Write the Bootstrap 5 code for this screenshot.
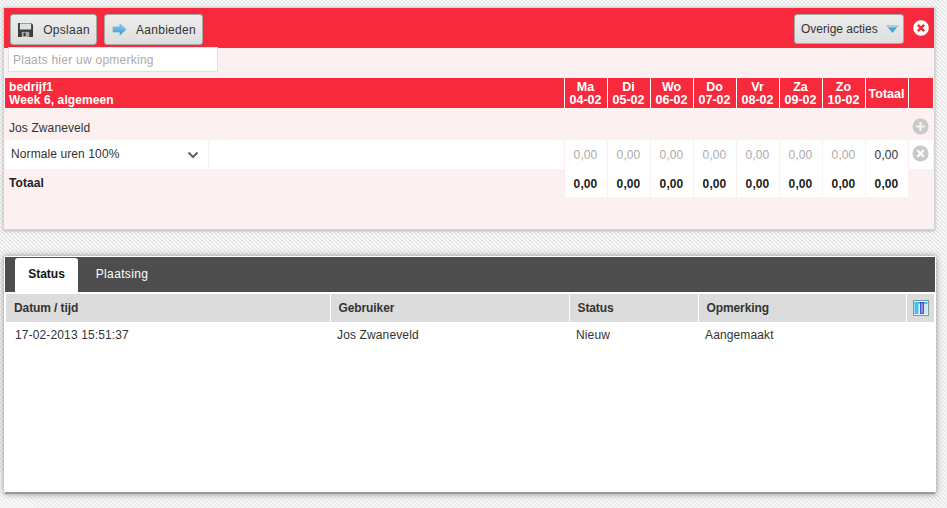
<!DOCTYPE html>
<html lang="nl">
<head>
<meta charset="utf-8">
<title>Week 6</title>
<link rel="stylesheet" href="https://cdn.jsdelivr.net/npm/bootstrap@5.3.0/dist/css/bootstrap.min.css">
<style>
html,body{height:100%}
body{margin:0;padding:7px 0 0 3px;font-family:"Liberation Sans",Arial,sans-serif;font-size:12px;color:#333;letter-spacing:.1px;
background-color:#f3f3f3;background-image:repeating-linear-gradient(45deg,#e8e8e8 0 1.4px,#f8f8f8 1.4px 2.83px);overflow:hidden}
.sheet-top{width:932px;height:223px;background:#fdf0f0;border:1px solid #d4d4d4;box-shadow:0 1px 3px rgba(0,0,0,.25)}
.bar-red{background:#f62a3c;height:40px;padding:6px 5px 0 6px}
.tool-btn{height:31px;background:linear-gradient(#ededed,#dedede);border:1px solid #a8a8a8;border-radius:3px;color:#333;font-size:12px;padding:0 6px;letter-spacing:.3px}
.tool-btn:hover{background:#e4e4e4;color:#333;border-color:#a8a8a8}
.tool-ico{margin-left:1px}
.btn-save{width:87px}
.btn-offer{width:99px;margin-left:7px}
.btn-more{width:110px;height:30px;letter-spacing:0;padding-right:4px}
.close-mark{margin:6px 0 0 9px}
.note-box{width:210px;height:25px;margin:-1px 0 0 4px;padding:0 4px;border:1px solid #e4e0e0;border-radius:0;font-size:12px;letter-spacing:.25px;background:#fff;box-shadow:none}
.note-box::placeholder{color:#aaa;opacity:1}
.hours-wrap{padding:6px 0 0 1px}
.hours{table-layout:fixed;width:928px;border-collapse:collapse;font-size:12px}
.hours th,.hours td{padding:0;border-right:1px solid #fdf0f0;text-align:center}
.hours thead th{background:#f62a3c;color:#fff;height:30px;font-weight:700;line-height:13px;border-right:1px solid #fff;font-size:12.5px;letter-spacing:0;padding-top:2px}
.hours thead th.lead-cell{text-align:left;padding:2px 0 0 4px;font-size:12px;letter-spacing:.1px}
.hours thead th:last-child{border-right:0}
.row-person td{height:32px;text-align:left;padding:8px 0 0 4px}
.row-person td.act{padding:3px 0 0;text-align:center}
.row-hours td{background:#fff;height:29px;color:#aaa;padding-top:1px}
.row-hours td.sum{color:#333}
.row-hours td.sel{color:#333;text-align:left;padding:0 0 1px 6px;position:relative}
.row-hours td.sel svg{position:absolute;left:182px;top:11px}
.row-hours td.act{background:#fff;padding:0 0 3px}
.row-total td{height:28px;font-weight:700;color:#222;background:#fff;padding-top:2px}
.row-total td.lbl{background:transparent;text-align:left;padding:0 0 0 4px}
.row-total td.none{background:transparent;border:0}
.sheet-low{width:932px;height:238px;margin:26px 0 0 1px;background:#fff;border:1px solid #fff;box-shadow:0 0 6px rgba(0,0,0,.42);border-bottom:2px solid #999}
.tab-head{height:35px;background:#4d4d4d;padding:1px 0 0 10px}
.tab-head .nav-link{height:34px;width:63px;padding:7px 0 0;text-align:center;color:#fff;border:0;border-radius:3px 3px 0 0;font-size:12px;letter-spacing:.35px;background:transparent}
.tab-head .nav-link.active{background:#fff;color:#111;font-weight:700;letter-spacing:0}
.tab-head .nav-item+.nav-item .nav-link{width:88px}
.log{table-layout:fixed;width:928px;margin:2px 0 0 1px;border-collapse:collapse;font-size:12px}
.log th{background:#dcdcdc;height:28px;padding:0 0 0 8px;color:#333;border-right:1px solid #fff;font-weight:700;letter-spacing:-.1px;vertical-align:middle}
.log th:last-child{border-right:0;padding:0 0 0 6px}
.log td{height:26px;padding:0 0 0 7px;color:#333;border:0;letter-spacing:.13px}
.log td:first-child{padding-left:9px}
</style>
</head>
<body>
<div class="sheet-top">
  <div class="bar-red d-flex align-items-start">
    <button type="button" class="btn tool-btn btn-save d-flex align-items-center justify-content-between">
      <svg class="tool-ico" width="15" height="15" viewBox="0 0 16 16"><path d="M0 1h14l2 2v13H0z" fill="#3c3c3c"/><rect x="2" y="1.500" width="12" height="6.500" fill="#d8e2e2"/><rect x="4" y="10.500" width="8" height="5.500" fill="#a9a9a9"/><rect x="6" y="11.500" width="2" height="3.500" fill="#333"/></svg>
      <span>Opslaan</span>
    </button>
    <button type="button" class="btn tool-btn btn-offer d-flex align-items-center justify-content-between">
      <svg class="tool-ico" width="15" height="13" viewBox="0 0 16 15"><defs><linearGradient id="arr" x1="0" y1="0" x2="0" y2="1"><stop offset="0" stop-color="#8fd4f7"/><stop offset="1" stop-color="#2d93d8"/></linearGradient></defs><path d="M0.500 4.500h8V0.800L15.500 7.500 8.500 14.200V10.500h-8z" fill="url(#arr)" stroke="#7fa9c4" stroke-width=".7"/></svg>
      <span>Aanbieden</span>
    </button>
    <button type="button" class="btn tool-btn btn-more ms-auto d-flex align-items-center justify-content-between">
      <span>Overige acties</span>
      <svg width="13" height="8" viewBox="0 0 13 8"><path d="M0 0h13L6.500 8z" fill="#4aa3dd"/><path d="M0 0h13l-1.500 2.500h-10z" fill="#a5d0ea"/></svg>
    </button>
    <svg class="close-mark" width="16" height="16" viewBox="0 0 17 17"><circle cx="8.500" cy="8.500" r="8.300" fill="#fff"/><path d="M5.200 5.200l6.600 6.600M11.800 5.200l-6.600 6.600" stroke="#f62a3c" stroke-width="2.600"/></svg>
  </div>
  <input class="form-control note-box" type="text" placeholder="Plaats hier uw opmerking">
  <div class="hours-wrap">
    <table class="hours">
      <colgroup><col style="width:203px"><col style="width:356px"><col span="8" style="width:43px"><col style="width:25px"></colgroup>
      <thead>
        <tr>
          <th class="lead-cell" colspan="2">bedrijf1<br>Week 6, algemeen</th>
          <th>Ma<br>04-02</th><th>Di<br>05-02</th><th>Wo<br>06-02</th><th>Do<br>07-02</th><th>Vr<br>08-02</th><th>Za<br>09-02</th><th>Zo<br>10-02</th><th>Totaal</th><th></th>
        </tr>
      </thead>
      <tbody>
        <tr class="row-person">
          <td colspan="10">Jos Zwaneveld</td>
          <td class="act"><svg width="17" height="17" viewBox="0 0 17 17"><circle cx="8.500" cy="8.500" r="8" fill="#c9c9c9"/><path d="M8.500 4v9M4 8.500h9" stroke="#fdf0f0" stroke-width="2.200"/></svg></td>
        </tr>
        <tr class="row-hours">
          <td class="sel">Normale uren 100%
            <svg width="12" height="8" viewBox="0 0 12 8"><path d="M1.500 1.500L6 6l4.500-4.500" fill="none" stroke="#666" stroke-width="2.200"/></svg>
          </td>
          <td></td>
          <td>0,00</td><td>0,00</td><td>0,00</td><td>0,00</td><td>0,00</td><td>0,00</td><td>0,00</td><td class="sum">0,00</td>
          <td class="act"><svg width="17" height="17" viewBox="0 0 17 17"><circle cx="8.500" cy="8.500" r="8" fill="#c9c9c9"/><path d="M5.300 5.300l6.400 6.400M11.700 5.300l-6.400 6.400" stroke="#fff" stroke-width="2.200"/></svg></td>
        </tr>
        <tr class="row-total">
          <td class="lbl" colspan="2">Totaal</td>
          <td>0,00</td><td>0,00</td><td>0,00</td><td>0,00</td><td>0,00</td><td>0,00</td><td>0,00</td><td>0,00</td><td class="none"></td>
        </tr>
      </tbody>
    </table>
  </div>
</div>
<div class="sheet-low">
  <ul class="nav tab-head">
    <li class="nav-item"><a class="nav-link active" href="#">Status</a></li>
    <li class="nav-item"><a class="nav-link" href="#">Plaatsing</a></li>
  </ul>
  <table class="log">
    <colgroup><col style="width:324px"><col style="width:239px"><col style="width:129px"><col style="width:208px"><col style="width:28px"></colgroup>
    <thead>
      <tr>
        <th>Datum / tijd</th><th>Gebruiker</th><th>Status</th><th>Opmerking</th>
        <th><svg class="d-block" width="16" height="16" viewBox="0 0 16 16"><rect x=".5" y=".5" width="15" height="15" fill="#eef2fb" stroke="#7d9a9f"/><rect x="1.500" y="2" width="4" height="12" fill="#3cc4f5"/><rect x="10.500" y="4" width="4" height="10" fill="#cfe6f5"/><rect x="1.500" y="2" width="13" height="2" fill="#3cc4f5"/><rect x="7.500" y="2.500" width="3" height="11" fill="#8f8fe8" stroke="#3333c4" stroke-width=".8"/></svg></th>
      </tr>
    </thead>
    <tbody>
      <tr><td>17-02-2013 15:51:37</td><td>Jos Zwaneveld</td><td>Nieuw</td><td>Aangemaakt</td><td></td></tr>
    </tbody>
  </table>
</div>
<script src="https://cdn.jsdelivr.net/npm/bootstrap@5.3.0/dist/js/bootstrap.bundle.min.js"></script>
</body>
</html>
